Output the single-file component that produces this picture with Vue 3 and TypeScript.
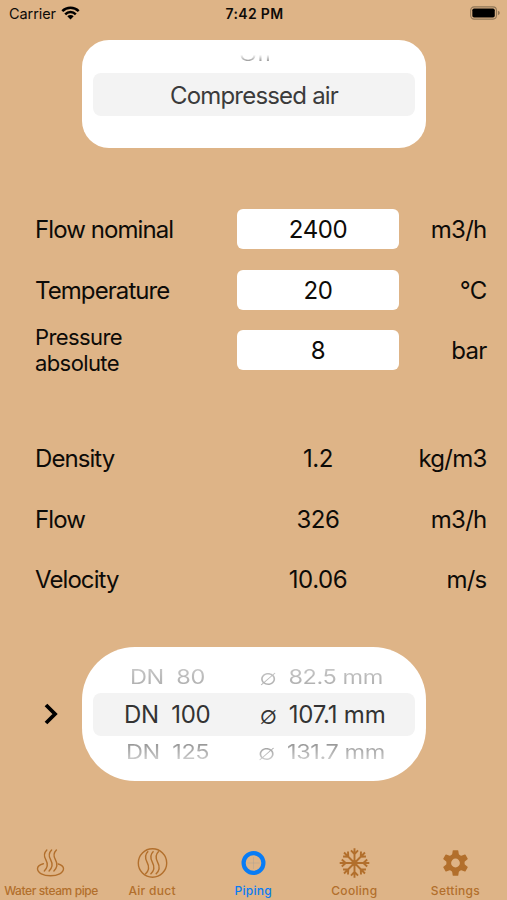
<script setup lang="ts">
interface Row {
  label: string
  value: string
  unit: string
  small?: boolean
}

interface PipeOption {
  dn: string
  size: string
  state: 'above' | 'selected' | 'below'
}

const inputs: Row[] = [
  { label: 'Flow nominal', value: '2400', unit: 'm3/h' },
  { label: 'Temperature', value: '20', unit: '°C' },
  { label: 'Pressure absolute', value: '8', unit: 'bar', small: true },
]

const results: Row[] = [
  { label: 'Density', value: '1.2', unit: 'kg/m3' },
  { label: 'Flow', value: '326', unit: 'm3/h' },
  { label: 'Velocity', value: '10.06', unit: 'm/s' },
]

const pipes: PipeOption[] = [
  { dn: '80', size: '82.5 mm', state: 'above' },
  { dn: '100', size: '107.1 mm', state: 'selected' },
  { dn: '125', size: '131.7 mm', state: 'below' },
]

const tabs = ['Water steam pipe', 'Air duct', 'Piping', 'Cooling', 'Settings']
const activeTab = 'Piping'
const arms = [0, 45, 90, 135, 180, 225, 270, 315]
const teeth = [0, 60, 120, 180, 240, 300]
const plumes = [-4.8, 0, 4.8]
</script>

<template>
  <main class="screen">
    <header class="status">
      <div class="carrier">
        <span>Carrier</span>
        <svg class="wifi" viewBox="0 0 19 14">
          <path d="M1.3 5.2a11.7 11.7 0 0 1 16.4 0M4.2 8.3a7.5 7.5 0 0 1 10.6 0" fill="none" stroke="#000" stroke-width="2.5" />
          <path d="M9.5 13.6 6.3 10.3a4.6 4.6 0 0 1 6.4 0Z" fill="#000" />
        </svg>
      </div>
      <span class="clock">7:42 PM</span>
      <svg class="battery" viewBox="0 0 31 14">
        <rect x="0.7" y="0.7" width="26.6" height="12.6" rx="3.6" fill="none" stroke="#8f7557" stroke-width="1.1" />
        <rect x="2.4" y="2.4" width="23.2" height="9.2" rx="1.8" fill="#000" />
        <path d="M28.8 4.8q2 .6 2 2.2t-2 2.2Z" fill="#8f7557" />
      </svg>
    </header>

    <section class="picker medium">
      <div class="off"><span>Off</span></div>
      <div class="band">Compressed air</div>
    </section>

    <section class="rows inputs">
      <div v-for="row in inputs" :key="row.label" class="row">
        <span class="label" :class="{ small: row.small }">{{ row.label }}</span>
        <span class="value field">{{ row.value }}</span>
        <span class="unit">{{ row.unit }}</span>
      </div>
    </section>

    <section class="rows results">
      <div v-for="row in results" :key="row.label" class="row">
        <span class="label">{{ row.label }}</span>
        <span class="value">{{ row.value }}</span>
        <span class="unit">{{ row.unit }}</span>
      </div>
    </section>

    <section class="pipe">
      <svg class="chevron" viewBox="0 0 14 22">
        <path d="m2 2 9 9-9 9" fill="none" stroke="#000" stroke-width="3.8" />
      </svg>
      <div class="picker sizes">
        <div v-for="pipe in pipes" :key="pipe.dn" class="option" :class="pipe.state">
          <span class="dn">DN&nbsp; {{ pipe.dn }}</span>
          <span class="diameter"><i class="sign">∅</i>{{ pipe.size }}</span>
        </div>
      </div>
    </section>

    <nav class="tabs">
      <div v-for="tab in tabs" :key="tab" class="tab" :class="{ active: tab === activeTab, wide: tab === 'Water steam pipe' }">
        <svg class="icon" viewBox="0 0 32 32" fill="none" stroke="currentColor">
          <g v-if="tab === 'Water steam pipe'" stroke-width="1.4" stroke-linecap="round">
            <path d="M8.400 16.700C4.400 17.600 2.500 19.400 2.500 21.800c0 3.900 5.800 7 13 7s13-3.100 13-7c0-2.200-2-3.900-5.200-4.800" />
            <path v-for="x in plumes" :key="x" :transform="`translate(${x} 0)`" d="M16.600 3c-3.600 3.500-3 6.300-.9 9.900 2.200 4 1.900 7.600-1.600 11" />
          </g>
          <g v-else-if="tab === 'Air duct'" stroke-width="1.400">
            <circle cx="16.500" cy="16" r="14.200" />
            <path v-for="x in plumes" :key="x" :transform="`translate(${x * 1.1} 0)`" d="M17.500 4.300c-4 3.800-3.400 7-1.100 11 2.400 4.300 2 8.300-1.900 12" />
          </g>
          <g v-else-if="tab === 'Piping'">
            <circle cx="16.500" cy="16" r="9.900" stroke-width="4.200" />
            <path d="M16.500 10v12M10.500 16h12" stroke="#8f99a0" stroke-width=".5" opacity=".6" />
          </g>
          <g v-else-if="tab === 'Cooling'" stroke-width="1.900">
            <path v-for="a in arms" :key="a" :transform="`rotate(${a} 16.500 16)`" d="M16.500 16V1.200M13 3.300 16.500 7.200l3.500-3.900" />
            <circle cx="16.500" cy="16" r="2" fill="currentColor" />
          </g>
          <g v-else stroke="none" fill="currentColor">
            <path v-for="a in teeth" :key="a" :transform="`rotate(${a} 16.500 16)`" d="M12.800 9.500 13.700 3.700q.1-.5.700-.5h4.200q.6 0 .7.500l.9 5.800Z" />
            <path fill-rule="evenodd" d="M16.500 6.800a9.200 9.200 0 1 0 0 18.400 9.200 9.200 0 0 0 0-18.400Zm0 4.800a4.400 4.400 0 1 1 0 8.800 4.400 4.400 0 0 1 0-8.800Z" />
          </g>
        </svg>
        <span>{{ tab }}</span>
      </div>
    </nav>
  </main>
</template>

<style>
body {
  margin: 0;
  background: #deb487;
}
</style>

<style scoped>
.screen {
  display: flex;
  flex-direction: column;
  width: 507px;
  height: 900px;
  overflow: hidden;
  background: #deb487;
  color: #0d0b08;
  font-family: Inter, "DejaVu Sans", sans-serif;
  font-size: 24px;
  line-height: 30px;
}
.status {
  display: grid;
  grid-template-columns: 1fr auto 1fr;
  align-items: center;
  box-sizing: border-box;
  height: 27px;
  padding: 0 7px 0 9px;
  font-size: 14.500px;
  line-height: 20px;
}
.carrier {
  display: flex;
  align-items: center;
  gap: 6px;
  letter-spacing: -.08px;
}
.wifi { width: 19px; height: 14px; margin-top: -2px; margin-left: -1px; }
.clock { font-weight: 600; font-size: 14px; letter-spacing: .35px; }
.battery { width: 30px; height: 14px; margin-top: -1px; justify-self: end; }
.picker {
  box-sizing: border-box;
  width: 344px;
  background: #fff;
}
.medium {
  height: 108px;
  margin: 13px 0 0 82px;
  padding: 0 11px;
  border-radius: 27px;
}
.off {
  box-sizing: border-box;
  height: 33px;
  padding: 0 0 0 4px;
  color: #888;
  text-align: center;
}
.off span {
  display: block;
  height: 24px;
  font-size: 23px;
  line-height: 24px;
  transform: scaleY(.7);
  transform-origin: bottom;
  mask-image: linear-gradient(transparent 45%, #000 90%);
}
.band {
  height: 43px;
  border-radius: 8px;
  background: #f3f3f3;
  color: #3b3b3b;
  line-height: 45px;
  text-align: center;
  letter-spacing: -.8px;
}
.rows {
  display: grid;
  grid-template-rows: repeat(3, 60.500px);
  padding: 0 20px 0 35px;
}
.inputs { margin-top: 51px; }
.results { margin-top: 47.500px; }
.row {
  display: grid;
  grid-template-columns: 202px 162px 1fr;
  align-items: center;
}
.label { padding-top: 2px; letter-spacing: -.92px; }
.small {
  width: 120px;
  padding-top: 0;
  font-size: 22px;
  line-height: 26px;
  letter-spacing: -.6px;
}
.value { padding-top: 2px; text-align: center; letter-spacing: -.4px; }
.field {
  height: 40px;
  padding-top: 0;
  border-radius: 6px;
  background: #fff;
  line-height: 41px;
}
.unit { padding: 2px .5px 0 0; text-align: right; letter-spacing: -.75px; }
.pipe {
  display: flex;
  align-items: center;
  height: 134px;
  margin-top: 37px;
  padding-left: 44px;
}
.chevron { width: 14px; height: 22px; margin-right: 24px; }
.sizes {
  height: 134px;
  padding: 14px 11px;
  border-radius: 53px;
}
.option {
  display: flex;
  align-items: center;
  justify-content: space-between;
  box-sizing: border-box;
  height: 32px;
  padding: 1px 32px 0 37px;
  white-space: pre;
  letter-spacing: -.4px;
}
.below { padding: 0 30px 0 33px; }
.above > span, .below > span { transform: scaleY(.85); }
.option:not(.selected) { font-size: 23.500px; }
.below > span {
  color: transparent;
  background: linear-gradient(#888, #ddd);
  background-clip: text;
}
.above > span {
  color: transparent;
  background: linear-gradient(#ccc, #aaa);
  background-clip: text;
}
.selected {
  height: 43px;
  padding: 2px 29.500px 0 31px;
  border-radius: 8px;
  background: #f3f3f3;
  color: #333;
}
.selected .diameter { letter-spacing: -.2px; }
.diameter { display: flex; align-items: center; }
.sign {
  width: 29px;
  font-style: normal;
  font-size: 25px;
  font-weight: 300;
}
.tabs {
  display: grid;
  grid-template-columns: repeat(5, 101.100px);
  margin-top: auto;
  padding-left: .5px;
  height: 53px;
  color: #b26f2c;
}
.tab {
  display: flex;
  flex-direction: column;
  align-items: center;
  font-size: 12px;
  font-weight: 500;
  line-height: 16px;
  letter-spacing: .3px;
  white-space: nowrap;
}
.wide { letter-spacing: -.4px; }
.active { color: #087cf5; }
.icon { width: 32px; height: 32px; margin-bottom: 4px; }
</style>
